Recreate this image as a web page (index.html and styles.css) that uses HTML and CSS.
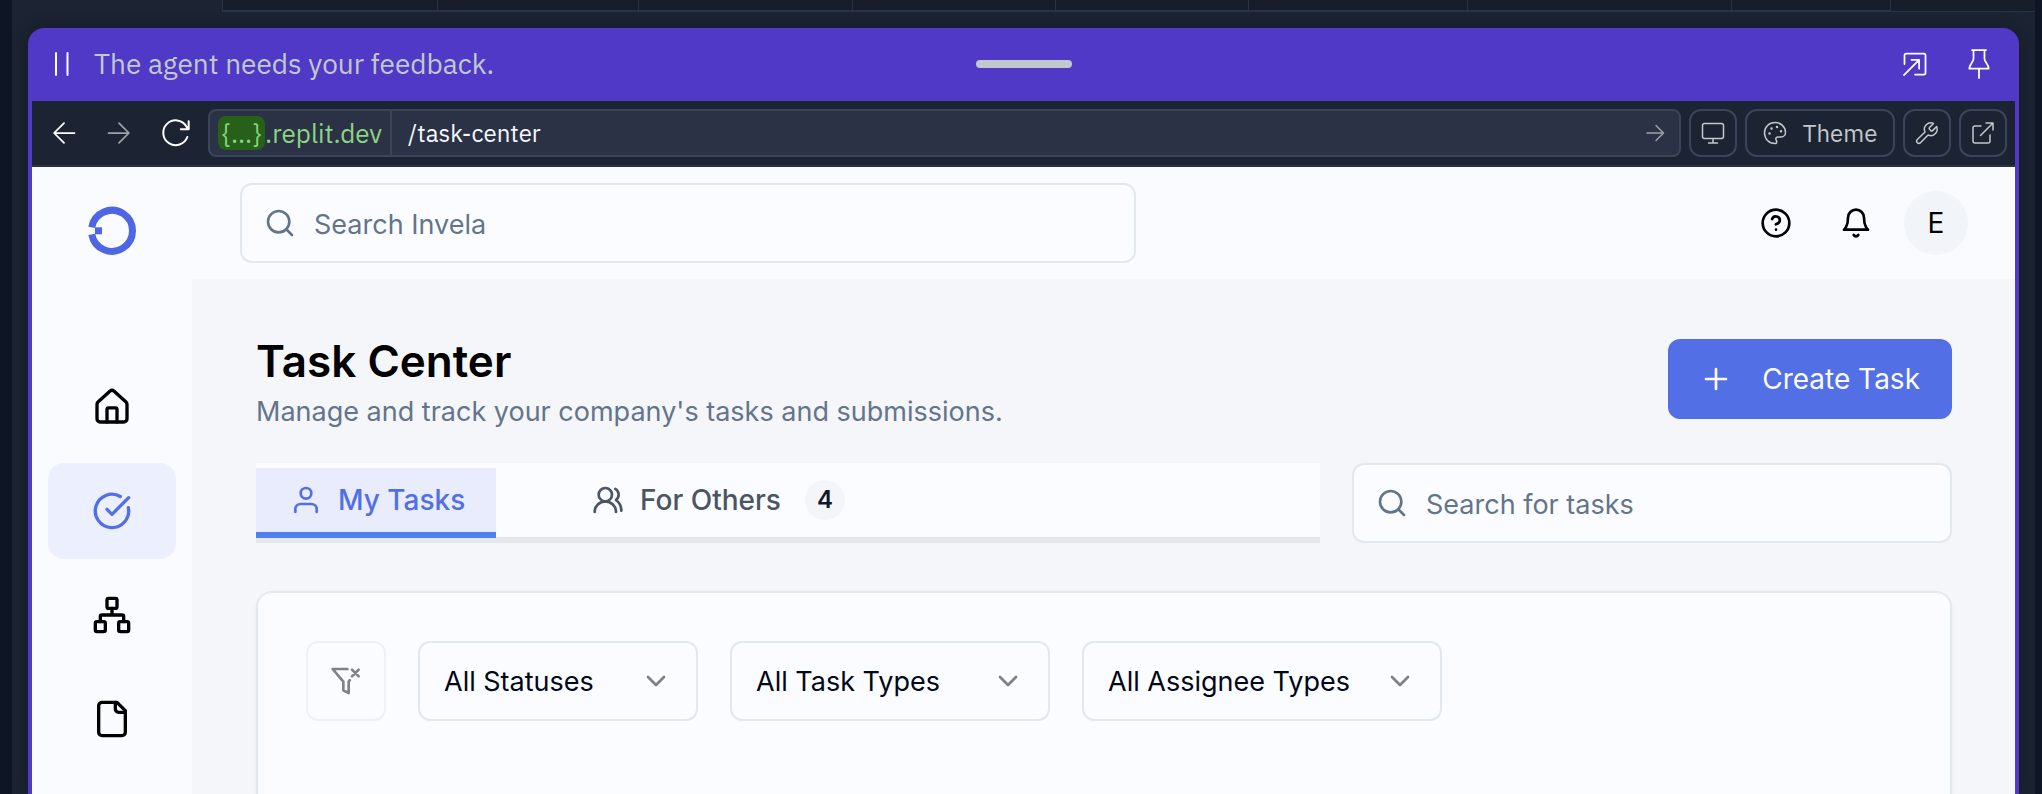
FILE: index.html
```html
<!DOCTYPE html>
<html lang="en">
<head>
<meta charset="utf-8">
<title>Task Center</title>
<link rel="stylesheet" href="styles.css">
</head>
<body>
<div class="ide">
  <div class="ide-tabs">
    <span class="ide-tab" style="flex-grow:215"></span><span class="ide-tab" style="flex-grow:201"></span><span class="ide-tab" style="flex-grow:214"></span><span class="ide-tab" style="flex-grow:203"></span><span class="ide-tab" style="flex-grow:193"></span><span class="ide-tab" style="flex-grow:219"></span><span class="ide-tab" style="flex-grow:264"></span><span class="ide-tab" style="flex-grow:159"></span><span class="ide-tab ide-rest" style="flex-grow:145"></span>
  </div>
  <section class="panel">
    <header class="agent">
      <div class="agent-status">
        <svg class="i24" viewBox="0 0 24 24"><path stroke-width="2" d="M6 1v22M17.500 1v22"/></svg>
        <span>The agent needs your feedback.</span>
      </div>
      <span class="grip"></span>
      <div class="agent-actions">
        <button aria-label="Pop out"><svg class="i28" viewBox="0 0 24 24"><path d="M3 12V4.500A1.500 1.500 0 0 1 4.500 3h15A1.500 1.500 0 0 1 21 4.500v15a1.500 1.500 0 0 1-1.500 1.500H12M2.500 21.500 15.500 8.500M9 8.500h6.500V16"/></svg></button>
        <button aria-label="Pin"><svg class="i28" viewBox="0 0 24 24"><path d="M6 0h12M7.300 0v7.500c0 3-3.600 4.500-3.600 8.500h16.600c0-4-3.600-5.500-3.600-8.500V0M12 16v8"/></svg></button>
      </div>
    </header>
    <div class="toolbar">
      <div class="nav">
        <button aria-label="Back"><svg class="i28" viewBox="0 0 24 24"><path d="M21 12H3.500M12 3.500 3.500 12l8.500 8.500"/></svg></button>
        <button class="dim" aria-label="Forward"><svg class="i28" viewBox="0 0 24 24"><path d="M3 12h17.500M12 3.500l8.500 8.500-8.500 8.500"/></svg></button>
        <button aria-label="Reload"><svg class="i32" viewBox="0 0 24 24"><path d="M20.500 15a9.300 9.300 0 1 1-.8-8l1.500 2M21.500 3.200v5.900h-5.900"/></svg></button>
      </div>
      <div class="address">
        <span class="host"><span class="sub">{...}</span>.replit.dev</span>
        <input class="path" aria-label="Path" value="/task-center">
        <button class="go" aria-label="Go"><svg class="i24" viewBox="0 0 24 24"><path d="M4 12h16M13 4.500l7.500 7.500-7.500 7.500"/></svg></button>
      </div>
      <button class="tool" aria-label="Device"><svg class="i24" viewBox="0 0 24 24"><rect x="1.500" y="2.500" width="21" height="15" rx="2"/><path d="M12 18v4M7.500 22h9"/></svg></button>
      <button class="tool theme"><svg class="i24" viewBox="0 0 24 24"><path d="M12 1.500C6 1.500 1.500 6.200 1.500 12S6 22.500 12 22.500c1.200 0 1.800-.8 1.800-1.800 0-1.200-1-1.600-1-2.800 0-1.300 1-2 2.300-2h3c2.600 0 4.400-2 4.400-4.500C22.500 5.800 17.800 1.500 12 1.500z"/><path stroke-width="2.500" d="M6.500 12.500h.01M8.500 7.500h.01M14 6h.01M18 10.200h.01"/></svg>Theme</button>
      <button class="tool" aria-label="Developer tools"><svg class="i24" viewBox="0 0 24 24"><path d="M14.500 6.500a1.200 1.200 0 0 0 0 1.700l1.400 1.400a1.200 1.200 0 0 0 1.700 0l4-4a6.400 6.400 0 0 1-8.500 8.400L5.500 21.700a2.200 2.200 0 0 1-3.200-3.200L10 11A6.400 6.400 0 0 1 18.500 2.500z"/></svg></button>
      <button class="tool" aria-label="Open in new tab"><svg class="i24" viewBox="0 0 24 24"><path d="M10 5H4a2 2 0 0 0-2 2v13a2 2 0 0 0 2 2h13a2 2 0 0 0 2-2v-6M9.500 14.500 22 2M15 2h7v7"/></svg></button>
    </div>
    <div class="app">
      <nav class="sidebar">
        <a class="logo" href="#" aria-label="Invela"><svg class="i48" viewBox="0 0 48 48"><path class="ring" d="M3.800 20.300A20.500 20.500 0 1 1 3.800 27.300"/><path class="dot" d="M7 20.300h7v7H7z"/></svg></a>
        <a class="item" href="#" aria-label="Home"><svg class="i40" viewBox="0 0 24 24"><path d="M3 10.500a2 2 0 0 1 .6-1.500L10.700 2.500a2 2 0 0 1 2.600 0L20.400 9a2 2 0 0 1 .6 1.500V19a2 2 0 0 1-2 2H5a2 2 0 0 1-2-2z"/><path d="M9 21v-7.500a1 1 0 0 1 1-1h4a1 1 0 0 1 1 1V21"/></svg></a>
        <a class="item active" href="#" aria-label="Tasks"><svg class="i40" viewBox="0 0 24 24"><path d="M21.800 10A10 10 0 1 1 17 3.300"/><path d="m9 11 3 3L22 4"/></svg></a>
        <a class="item" href="#" aria-label="Network"><svg class="i40" viewBox="0 0 24 24"><rect x="16" y="16" width="6" height="6" rx="1"/><rect x="2" y="16" width="6" height="6" rx="1"/><rect x="9" y="2" width="6" height="6" rx="1"/><path d="M5 16v-3a1 1 0 0 1 1-1h12a1 1 0 0 1 1 1v3M12 12V8"/></svg></a>
        <a class="item" href="#" aria-label="Files"><svg class="i40" viewBox="0 0 24 24"><path d="M15 2H6a2 2 0 0 0-2 2v16a2 2 0 0 0 2 2h12a2 2 0 0 0 2-2V7z"/><path d="M14 2v4a2 2 0 0 0 2 2h4"/></svg></a>
      </nav>
      <div class="page">
        <header class="topbar">
          <label class="search"><svg class="i32" viewBox="0 0 24 24"><circle cx="11" cy="11" r="8"/><path d="m21 21-4.300-4.300"/></svg><input type="text" placeholder="Search Invela" aria-label="Search Invela"></label>
          <div class="user">
            <button aria-label="Help"><svg class="i32" viewBox="0 0 24 24"><circle cx="12" cy="12" r="10"/><path d="M9.100 9a3 3 0 0 1 5.800 1c0 2-3 3-3 3M12 17h.01"/></svg></button>
            <button aria-label="Notifications"><svg class="i32" viewBox="0 0 24 24"><path d="M6 8a6 6 0 0 1 12 0c0 7 3 9 3 9H3s3-2 3-9M10.300 21a1.940 1.940 0 0 0 3.400 0"/></svg></button>
            <button class="avatar">E</button>
          </div>
        </header>
        <main class="main">
          <div class="title-row">
            <div class="title">
              <h1>Task Center</h1>
              <p>Manage and track your company's tasks and submissions.</p>
            </div>
            <button class="create"><svg class="i32" viewBox="0 0 24 24"><path d="M4.500 12h15M12 4.500v15"/></svg>Create Task</button>
          </div>
          <div class="tab-row">
            <div class="tabs" role="tablist">
              <button class="tab on" role="tab" aria-selected="true"><svg class="i32" viewBox="0 0 24 24"><circle cx="12" cy="7" r="4"/><path d="M20 21v-2a4 4 0 0 0-4-4H8a4 4 0 0 0-4 4v2"/></svg>My Tasks</button>
              <button class="tab" role="tab" aria-selected="false"><svg class="i32" viewBox="0 0 24 24"><path d="M18 21a8 8 0 0 0-16 0"/><circle cx="10" cy="8" r="5"/><path d="M22 20c0-3.400-2-6.500-4-8a5 5 0 0 0-.5-8.300"/></svg>For Others<span class="count">4</span></button>
            </div>
            <label class="search"><svg class="i32" viewBox="0 0 24 24"><circle cx="11" cy="11" r="8"/><path d="m21 21-4.300-4.300"/></svg><input type="text" placeholder="Search for tasks" aria-label="Search for tasks"></label>
          </div>
          <section class="card">
            <button class="clear" disabled aria-label="Clear filters"><svg class="i32" viewBox="0 0 24 24"><path d="M13 3H2l8 9.500V19l4 2v-8.500l.9-1.100M16.500 3.500l5 5M21.500 3.500l-5 5"/></svg></button>
            <div class="select w1"><select aria-label="Status"><option>All Statuses</option></select><svg class="i32" viewBox="0 0 24 24"><path d="m6 9 6 6 6-6"/></svg></div>
            <div class="select w2"><select aria-label="Task type"><option>All Task Types</option></select><svg class="i32" viewBox="0 0 24 24"><path d="m6 9 6 6 6-6"/></svg></div>
            <div class="select w3"><select aria-label="Assignee type"><option>All Assignee Types</option></select><svg class="i32" viewBox="0 0 24 24"><path d="m6 9 6 6 6-6"/></svg></div>
          </section>
        </main>
      </div>
    </div>
  </section>
</div>
</body>
</html>
```
FILE: styles.css
```css
* { box-sizing: border-box; }
body { margin: 0; background: #0e1525; font-family: Inter, sans-serif; font-size: 28px; color: #020817; }
button, input, select { font: inherit; color: inherit; border: 0; background: none; padding: 0; margin: 0; outline: 0; }
button { display: flex; align-items: center; justify-content: center; white-space: nowrap; }
a { color: inherit; }
svg { display: block; flex: none; overflow: visible; fill: none; stroke: currentColor; stroke-width: 2; stroke-linecap: round; stroke-linejoin: round; }
.i24 { width: 24px; height: 24px; }
.i28 { width: 28px; height: 28px; }
.i32 { width: 32px; height: 32px; }
.i40 { width: 40px; height: 40px; }
.i48 { width: 48px; height: 48px; }

.ide { height: 100vh; overflow: hidden; margin: 0 7px 0 12px; background: #1c2333; display: flex; flex-direction: column; }
.ide-tabs { display: flex; height: 12px; margin-left: 210px; flex: none; }
.ide-tab { flex-basis: 0; background: #171d2b; border-left: 1px solid #2b3245; border-bottom: 2px solid #2b3245; }
.ide-rest { border-bottom-width: 1px; }

.panel { flex: 1; min-height: 0; margin: 16px 16px 0; display: flex; flex-direction: column; background: #4f39c6; padding: 0 4px; border-radius: 16px 16px 0 0; box-shadow: 0 0 16px rgba(0, 0, 0, .3); font-family: "IBM Plex Sans", Roboto, sans-serif; }
.agent { display: grid; grid-template-columns: 1fr auto 1fr; align-items: center; height: 73px; flex: none; color: #fff; padding: 0 18px 2px; }
.agent svg, .toolbar svg { stroke-width: 1.5; }
.agent-status { display: flex; align-items: center; gap: 20px; }
.agent-status span { color: #c2c8cc; }
.grip { width: 96px; height: 8px; border-radius: 4px; background: #c2c8cc; }
.agent-actions { display: flex; justify-content: flex-end; gap: 36px; padding-right: 4px; }

.toolbar { display: flex; align-items: center; gap: 8px; height: 66px; flex: none; padding: 0 8px; background: #1c2333; border-bottom: 2px solid #2b3245; color: #c2c8cc; font-size: 24px; }
.nav { display: flex; width: 160px; justify-content: space-between; padding: 0 8px 0 10px; color: #fff; }
.dim { color: #9da2a6; }
.address { flex: 1; display: flex; align-items: stretch; height: 48px; background: #2b3245; border: 2px solid #3c445c; border-radius: 8px; overflow: hidden; }
.host { display: flex; align-items: center; padding: 0 8px; color: #8bd484; border-right: 2px solid #3c445c; font-size: 26px; }
.sub { background: #276019; border-radius: 8px; height: 34px; line-height: 34px; padding: 0 4px; }
.path { flex: 1; min-width: 0; padding: 0 16px; color: #f5f9fc; }
.go { width: 48px; color: #9da2a6; }
.tool { width: 48px; height: 48px; border: 2px solid #3c445c; border-radius: 12px; }
.theme { width: 150px; gap: 16px; }

.app { flex: 1; min-height: 0; display: flex; background: #f4f6fa; font-family: Inter, sans-serif; color: #000; }
.sidebar { width: 160px; flex: none; background: #fafbff; display: flex; flex-direction: column; align-items: center; gap: 8px; padding-top: 40px; }
.logo { margin-bottom: 96px; }
.ring { stroke: #4f66e4; stroke-width: 7; stroke-linecap: butt; }
.dot { fill: #4f66e4; stroke: none; }
.item { width: 128px; height: 96px; border-radius: 16px; display: flex; align-items: center; justify-content: center; flex: none; }
.active { background: #ebeffe; color: #526fe5; }
.page { flex: 1; min-width: 0; display: flex; flex-direction: column; }
.topbar { flex: none; height: 112px; padding: 0 47px 0 48px; background: #fafbff; display: flex; align-items: center; justify-content: space-between; }
.search { height: 80px; display: flex; align-items: center; gap: 18px; padding: 0 22px; border: 2px solid #e2e8f0; border-radius: 12px; background: #fbfcff; color: #64748b; font-size: 27px; }
.search input { flex: 1; min-width: 0; padding-top: 2px; }
.search input::placeholder { color: #64748b; opacity: 1; }
.topbar .search { flex: 0 1 896px; }
.user { display: flex; align-items: center; gap: 48px; }
.avatar { width: 64px; height: 64px; border-radius: 50%; background: #f1f5f9; margin-left: -16px; }

.main { flex: 1; padding: 48px 63px 0 64px; display: flex; flex-direction: column; }
.title-row { display: flex; justify-content: space-between; align-items: flex-start; padding-top: 12px; height: 136px; flex: none; }
h1 { margin: 0; font-size: 44px; line-height: 44px; font-weight: 600; }
p { margin: 8px 0 0; font-size: 27px; line-height: 42px; color: #64748b; }
.create { height: 80px; padding: 0 32px; gap: 30px; background: #526fe5; color: #fafbff; border-radius: 12px; }
.tab-row { display: grid; grid-template-columns: 1064fr 600fr; gap: 32px; flex: none; }
.tabs { display: flex; height: 80px; background: #fbfcff; border-bottom: 6px solid #e5e7eb; padding-top: 5px; }
.tab { height: 70px; padding: 0 30px 0 34px; gap: 16px; font-weight: 500; color: #4b5563; border-bottom: 6px solid transparent; justify-content: flex-start; }
.tab.on { width: 240px; background: #e9ecfd; color: #526fe5; border-color: #4f80ee; margin-right: 62px; }
.count { width: 40px; height: 40px; line-height: 40px; margin-left: 8px; border-radius: 50%; background: #f4f5f9; color: #0f172a; font-size: 24px; font-weight: 600; }
.card { flex: 1; margin-top: 48px; border: 2px solid #e2e8f0; border-bottom: 0; border-radius: 16px 16px 0 0; background: #fbfcff; padding: 48px; display: flex; align-items: flex-start; gap: 32px; box-shadow: 0 2px 4px rgba(0, 0, 0, .05); }
.clear { width: 80px; height: 80px; border: 2px solid #e2e8f0; border-radius: 12px; opacity: .5; color: #020817; }
.select { display: grid; align-items: center; color: #020817; font-size: 27px; }
.select > * { grid-area: 1 / 1; }
.select select { appearance: none; width: 100%; height: 80px; padding: 0 24px; border: 2px solid #e2e8f0; border-radius: 12px; }
.select svg { justify-self: end; margin-right: 26px; opacity: .5; pointer-events: none; }
.w1 { width: 280px; }
.w2 { width: 320px; }
.w3 { width: 360px; }
```
